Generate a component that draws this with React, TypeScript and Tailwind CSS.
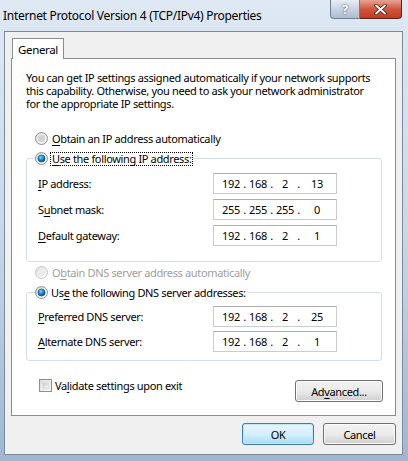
import React from 'react';

const FONT = { fontFamily: '"Segoe UI", "Noto Sans", Lato, sans-serif' };

const Radio = ({ checked, disabled }: { checked?: boolean; disabled?: boolean }) => (
  <svg width="13" height="13" viewBox="0 0 13 13" className="shrink-0">
    <defs>
      <linearGradient id="rb" x1="0" y1="0" x2="1" y2="1">
        <stop offset="0" stopColor="#dcdcdc" />
        <stop offset="1" stopColor="#ffffff" />
      </linearGradient>
      <radialGradient id="rd" cx="0.4" cy="0.35" r="0.7">
        <stop offset="0" stopColor="#7be0ff" />
        <stop offset="0.5" stopColor="#1c86c4" />
        <stop offset="1" stopColor="#0b3f78" />
      </radialGradient>
    </defs>
    <circle cx="6.5" cy="6.5" r="6" fill="url(#rb)" stroke={disabled ? '#c9c9c9' : '#8f8f8f'} />
    {!checked && <circle cx="6.5" cy="6.5" r="3.6" fill={disabled ? '#ececec' : '#d2d2d2'} />}
    {checked && <circle cx="6.5" cy="6.5" r="3.6" fill="url(#rd)" stroke="#1b4f86" strokeWidth="0.6" />}
  </svg>
);

const U = ({ children }: { children: React.ReactNode }) => <span className="underline underline-offset-2">{children}</span>;

const IpField = ({ value }: { value: string[] }) => (
  <div className="w-[124px] h-[21px] border border-[#c9cdd3] border-t-[#abadb3] bg-white flex items-center pl-[8px] text-black">
    <span className="w-[18px] text-center">{value[0]}</span>
    <span className="w-[9px] text-center">.</span>
    <span className="w-[18px] text-center">{value[1]}</span>
    <span className="w-[9px] text-center">.</span>
    <span className="w-[18px] text-center">{value[2]}</span>
    <span className="w-[9px] text-center">.</span>
    <span className="w-[28px] text-center">{value[3]}</span>
  </div>
);

const Row = ({ label, value }: { label: React.ReactNode; value: string[] }) => (
  <div className="flex items-center h-[21px]">
    <span className="w-[175px]">{label}</span>
    <IpField value={value} />
  </div>
);

const Button = ({ children, primary, className }: { children: React.ReactNode; primary?: boolean; className?: string }) => (
  <div
    className={
      'h-[22px] flex items-center justify-center rounded-[3px] border text-black ' +
      (primary
        ? 'border-[#3c7fb1] bg-gradient-to-b from-[#e9f6fd] via-[#d6effc] to-[#a9dbf6] shadow-[inset_0_0_0_1px_#bfe6fb] '
        : 'border-[#707070] bg-gradient-to-b from-[#f2f2f2] via-[#ebebeb] to-[#cfcfcf] shadow-[inset_0_0_0_1px_#fcfcfc] ') +
      (className || '')
    }
  >
    {children}
  </div>
);

export default function App() {
  return (
    <div style={FONT} className="w-[408px] h-[461px] overflow-hidden bg-gradient-to-b from-[#dfe9f4] via-[#c8d8ea] to-[#9db7d3] flex flex-col text-[11px] leading-[13px] tracking-[-0.35px] text-black">
      {/* title bar */}
      <div className="h-[31px] flex items-start shrink-0">
        <div className="pl-[3px] pt-[9px] whitespace-nowrap text-[12px] tracking-[-0.3px]">Internet Protocol Version 4 (TCP/IPv4) Properties</div>
        <div className="ml-auto mr-[6px] flex">
          <div className="w-[30px] h-[19px] rounded-bl-[4px] border border-t-0 border-[#6f7f95] bg-gradient-to-b from-[#e7edf4] via-[#c9d4e2] to-[#aebdd0] flex items-center justify-center">
            <span className="text-white font-bold text-[13px] leading-[13px] [text-shadow:0_0_2px_#333]">?</span>
          </div>
          <div className="w-[42px] h-[19px] rounded-br-[4px] border border-t-0 border-l-0 border-[#5a2418] bg-gradient-to-b from-[#e8a493] via-[#d0553c] to-[#c33a22] flex items-center justify-center">
            <svg width="13" height="11" viewBox="0 0 13 11">
              <path d="M2 1.5 L11 9.5 M11 1.5 L2 9.5" stroke="#3a1a12" strokeWidth="3.4" strokeLinecap="round" />
              <path d="M2 1.5 L11 9.5 M11 1.5 L2 9.5" stroke="#ffffff" strokeWidth="2" strokeLinecap="round" />
            </svg>
          </div>
        </div>
      </div>

      {/* client area */}
      <div className="ml-[4px] mr-[5px] h-[424px] border border-[#7d8a9b] bg-[#f0f0f0] flex flex-col px-[6px]">
        {/* tabs */}
        <div className="h-[26px] flex items-end">
          <div className="ml-[1px] w-[52px] h-[21px] border border-b-0 border-[#898c95] bg-white flex items-center justify-center relative top-[1px] text-[11.5px]">
            General
          </div>
        </div>
        {/* panel */}
        <div className="h-[358px] border border-[#898c95] bg-white flex flex-col pl-[14px] pr-[12px]">
          <div className="mt-[12px] flex flex-col whitespace-nowrap">
            <span className="h-[13px]">You can get IP settings assigned automatically if your network supports</span>
            <span className="h-[13px]">this capability. Otherwise, you need to ask your network administrator</span>
            <span className="h-[13px]">for the appropriate IP settings.</span>
          </div>

          <div className="mt-[21px] ml-[9px] flex items-center gap-[4px] h-[15px]">
            <Radio />
            <span>
              <U>O</U>btain an IP address automatically
            </span>
          </div>

          <fieldset className="mt-[5px] w-[356px] h-[111px] border border-[#d5dfe5] rounded-[3px] pl-[11px] pr-[10px]">
            <legend className="ml-[-3px] pr-[1px] flex items-center gap-[3px] h-[15px]">
              <Radio checked />
              <span className="outline outline-1 outline-dotted outline-black px-[1px] leading-[12px]">
                <U>U</U>se the following IP address:
              </span>
            </legend>
            <div className="flex flex-col gap-[5px] mt-[7px]">
              <Row label={<><U>I</U>P address:</>} value={['192', '168', '2', '13']} />
              <Row label={<>S<U>u</U>bnet mask:</>} value={['255', '255', '255', '0']} />
              <Row label={<><U>D</U>efault gateway:</>} value={['192', '168', '2', '1']} />
            </div>
          </fieldset>

          <div className="mt-[3px] ml-[9px] flex items-center gap-[4px] h-[15px] text-[#a0a0a0]">
            <Radio disabled />
            <span>
              O<U>b</U>tain DNS server address automatically
            </span>
          </div>

          <fieldset className="mt-[5px] w-[356px] h-[76px] border border-[#d5dfe5] rounded-[3px] pl-[11px] pr-[10px]">
            <legend className="ml-[-3px] pr-[1px] flex items-center gap-[3px] h-[15px]">
              <Radio checked />
              <span>
                Us<U>e</U> the following DNS server addresses:
              </span>
            </legend>
            <div className="flex flex-col gap-[4px] mt-[6px]">
              <Row label={<><U>P</U>referred DNS server:</>} value={['192', '168', '2', '25']} />
              <Row label={<><U>A</U>lternate DNS server:</>} value={['192', '168', '2', '1']} />
            </div>
          </fieldset>

          <div className="mt-[14px] flex items-start">
            <div className="ml-[13px] mt-[4px] flex items-center gap-[3px]">
              <div className="w-[13px] h-[13px] border border-[#8f8f8f] bg-gradient-to-br from-[#dcdcdc] to-[#fafafa] p-[2px]">
                <div className="w-full h-full bg-gradient-to-br from-[#cbcbcb] to-[#f4f4f4] border border-[#e0e0e0]" />
              </div>
              <span>
                Va<U>l</U>idate settings upon exit
              </span>
            </div>
            <Button className="ml-auto mt-[5px] w-[88px]">
              <span>
                Ad<U>v</U>anced...
              </span>
            </Button>
          </div>
        </div>

        {/* bottom buttons */}
        <div className="mt-[7px] flex justify-end gap-[9px]">
          <Button primary className="w-[72px]">OK</Button>
          <Button className="w-[73px]">Cancel</Button>
        </div>
      </div>
    </div>
  );
}
